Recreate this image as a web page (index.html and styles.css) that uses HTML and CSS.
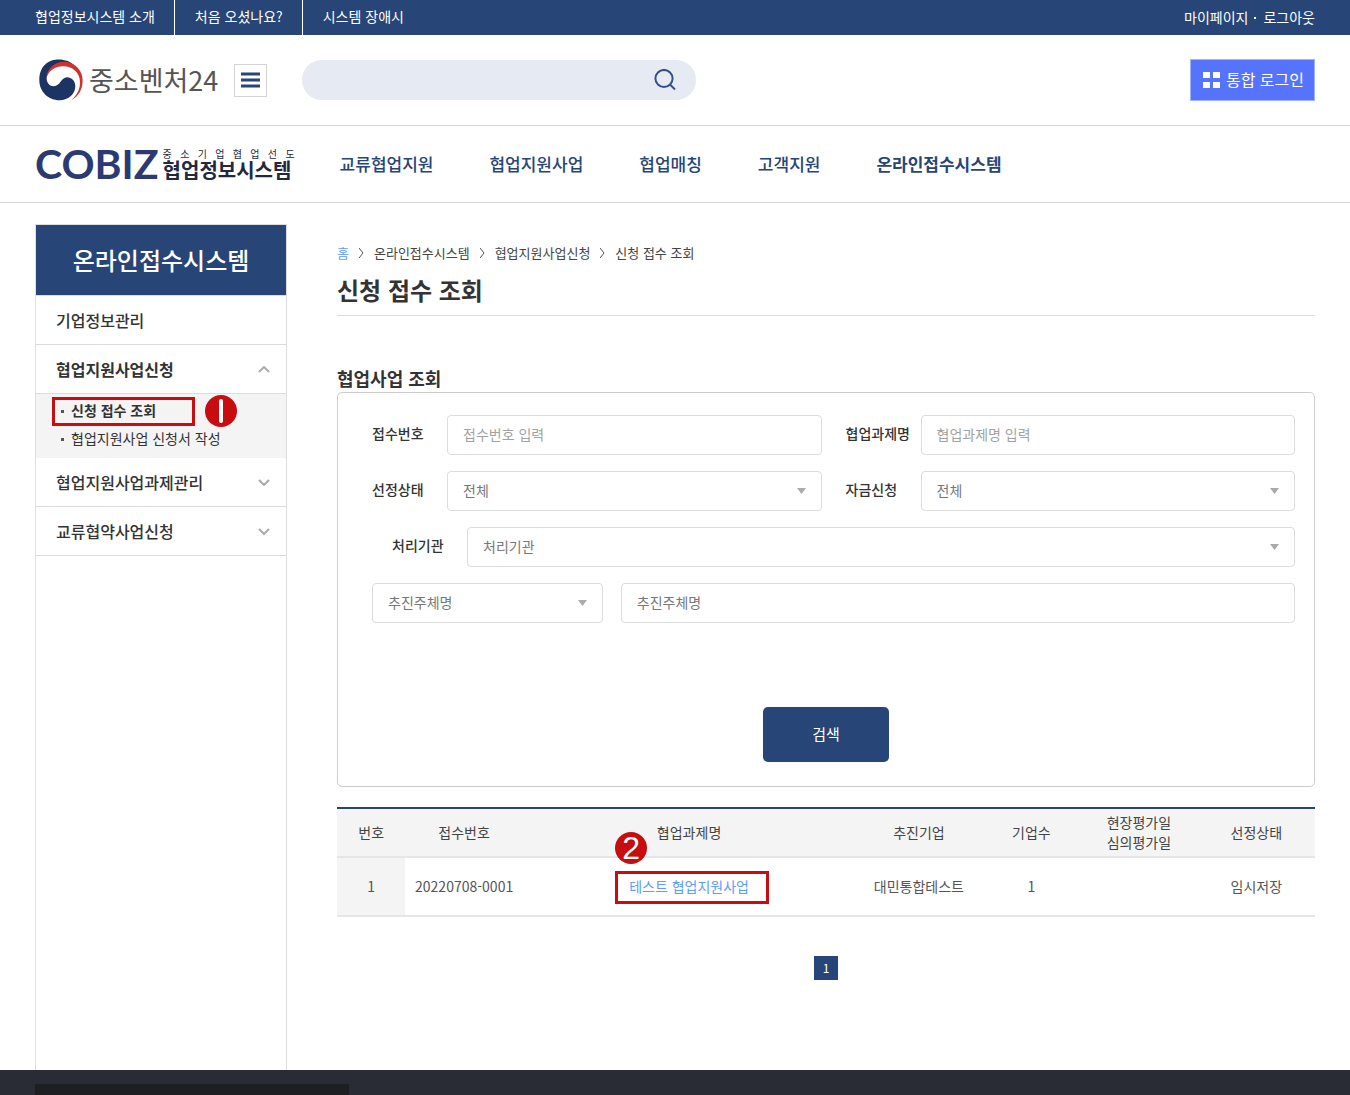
FILE: index.html
```html
<!DOCTYPE html>
<html lang="ko">
<head>
<meta charset="utf-8">
<meta name="viewport" content="width=device-width, initial-scale=1">
<title>신청 접수 조회</title>
<link rel="stylesheet" href="styles.css">
</head>
<body>
<div class="topbar">
  <nav class="topbar-links">
    <a href="#">협업정보시스템 소개</a>
    <a href="#">처음 오셨나요?</a>
    <a href="#">시스템 장애시</a>
  </nav>
  <div class="topbar-user">
    <a href="#">마이페이지</a><i class="dot"></i><a href="#">로그아웃</a>
  </div>
</div>

<header class="header">
  <a class="brand" href="#">
    <svg class="emblem" viewBox="26 26 132 126" aria-hidden="true">
      <path fill="#1c3464" d="M132 45C108 18 27 14 27 90C27 125 55 150 88 150C115 150 135 130 135 108C135 92 124 81 110 81C92 81 90 108 70 108C58 108 49 98 49 84C49 50 95 30 132 45Z"/>
      <path fill="#cb352e" d="M49 82C48 55 75 32 105 34C135 37 157 60 157 90C157 118 145 138 123 150C140 135 149 118 149 96C149 65 125 48 98 48C75 48 54 62 49 82Z"/>
    </svg>
    <span class="brand-name">중소벤처24</span>
  </a>
  <button class="menu-btn" type="button" aria-label="전체 메뉴">
    <svg width="19" height="16" viewBox="0 0 19 16"><path d="M0 2H19M0 8H19M0 14H19" stroke="#274576" stroke-width="3"/></svg>
  </button>
  <form class="search">
    <input class="search-input" type="text" aria-label="검색어">
    <button class="search-btn" type="button" aria-label="통합검색">
      <svg width="22" height="22" viewBox="0 0 22 22" fill="none" stroke="#345288" stroke-width="2"><circle cx="10" cy="9.500" r="8.600"/><path d="M16 15.500L21 20.500"/></svg>
    </button>
  </form>
  <button class="login-btn" type="button">
    <svg width="17" height="16" viewBox="0 0 17 16" fill="#fff"><path d="M0 0H7V6H0zM10 0H17V6H10zM0 10H7V16H0zM10 10H17V16H10z"/></svg>
    <span>통합 로그인</span>
  </button>
</header>

<div class="gnb">
  <a class="cobiz" href="#">
    <span class="cobiz-mark">COBIZ</span>
    <span class="cobiz-text">
      <span class="cobiz-sub">중 소 기 업 협 업 선 도</span>
      <span class="cobiz-name">협업정보시스템</span>
    </span>
  </a>
  <nav class="gnb-links">
    <a href="#">교류협업지원</a>
    <a href="#">협업지원사업</a>
    <a href="#">협업매칭</a>
    <a href="#">고객지원</a>
    <a class="current" href="#">온라인접수시스템</a>
  </nav>
</div>

<div class="main">
  <aside class="side">
    <p class="side-title">온라인접수시스템</p>
    <a class="side-item" href="#">기업정보관리</a>
    <a class="side-item open" href="#">협업지원사업신청
      <svg class="chev" viewBox="0 0 12 7"><path d="M1 6L6 1L11 6"/></svg></a>
    <ul class="side-sub">
      <li class="current"><a href="#">신청 접수 조회</a><span class="mark-box mark-box-menu"></span>
        <svg class="mark-num mark-num-menu" viewBox="0 0 32 32" role="img" aria-label="1"><circle cx="16" cy="16" r="16"/><rect x="14" y="4" width="4" height="24" rx="2"/></svg>
      </li>
      <li><a href="#">협업지원사업 신청서 작성</a></li>
    </ul>
    <a class="side-item" href="#">협업지원사업과제관리
      <svg class="chev" viewBox="0 0 12 7"><path d="M1 1L6 6L11 1"/></svg></a>
    <a class="side-item" href="#">교류협약사업신청
      <svg class="chev" viewBox="0 0 12 7"><path d="M1 1L6 6L11 1"/></svg></a>
  </aside>

  <main class="content">
    <nav class="crumbs">
      <a class="home" href="#">홈</a>
      <svg viewBox="0 0 5 10"><path d="M0 0L4 5L0 10"/></svg>
      <a href="#">온라인접수시스템</a>
      <svg viewBox="0 0 5 10"><path d="M0 0L4 5L0 10"/></svg>
      <a href="#">협업지원사업신청</a>
      <svg viewBox="0 0 5 10"><path d="M0 0L4 5L0 10"/></svg>
      <a href="#">신청 접수 조회</a>
    </nav>
    <h1>신청 접수 조회</h1>
    <h2>협업사업 조회</h2>
    <form class="panel">
      <div class="row">
        <div class="field">
          <label for="f-no">접수번호</label>
          <input class="control" id="f-no" type="text" placeholder="접수번호 입력">
        </div>
        <div class="field">
          <label for="f-task">협업과제명</label>
          <input class="control" id="f-task" type="text" placeholder="협업과제명 입력">
        </div>
      </div>
      <div class="row">
        <div class="field">
          <label for="f-state">선정상태</label>
          <select class="control" id="f-state"><option>전체</option></select>
        </div>
        <div class="field">
          <label for="f-fund">자금신청</label>
          <select class="control" id="f-fund"><option>전체</option></select>
        </div>
      </div>
      <div class="row row-indent">
        <div class="field">
          <label for="f-org">처리기관</label>
          <select class="control" id="f-org"><option>처리기관</option></select>
        </div>
      </div>
      <div class="row row-subject">
        <select class="control" aria-label="검색 구분"><option>추진주체명</option></select>
        <input class="control dark" type="text" aria-label="추진주체명" placeholder="추진주체명">
      </div>
      <button class="submit" type="button">검색</button>
    </form>

    <table class="list">
      <colgroup><col class="w7"><col class="w12"><col class="w34"><col class="w13"><col class="w10"><col class="w12"><col class="w12"></colgroup>
      <thead>
        <tr><th>번호</th><th>접수번호</th><th>협업과제명</th><th>추진기업</th><th>기업수</th><th>현장평가일<br>심의평가일</th><th>선정상태</th></tr>
      </thead>
      <tbody>
        <tr>
          <td class="no">1</td><td>20220708-0001</td>
          <td><span class="task"><a href="#">테스트 협업지원사업</a><span class="mark-box mark-box-task"></span><span class="mark-num mark-num-task">2</span></span></td>
          <td>대민통합테스트</td><td>1</td><td></td><td>임시저장</td>
        </tr>
      </tbody>
    </table>
    <nav class="pages"><a href="#">1</a></nav>
  </main>
</div>

<footer class="footer"><div class="footer-box"></div></footer>
</body>
</html>
```
FILE: styles.css
```css
* { box-sizing: border-box; }

body {
  margin: 0;
  min-height: 100vh;
  display: flex;
  flex-direction: column;
  background: #fff;
  color: #333;
  font: 14px/20px "Noto Sans CJK KR", sans-serif;
}

a { color: inherit; text-decoration: none; }
button, input, select { font: inherit; margin: 0; }
button { cursor: pointer; }
svg { display: block; flex: none; }

/* top bar */
.topbar {
  display: flex;
  justify-content: space-between;
  height: 35px;
  padding: 0 35px;
  background: #274576;
  color: #fff;
  line-height: 33px;
}
.topbar-links { display: flex; }
.topbar-links a { padding: 0 19px 0 20px; border-right: 1px solid #fff; }
.topbar-links a:first-child { padding-left: 0; }
.topbar-links a:last-child { border-right: 0; }
.topbar-user { display: flex; align-items: center; gap: 6px; }
.dot { width: 2px; height: 2px; margin-right: 1px; background: #fff; }

/* header */
.header {
  display: flex;
  align-items: center;
  height: 91px;
  padding: 0 35px;
  border-bottom: 1px solid #d7d7d7;
}
.brand { display: flex; align-items: center; gap: 6px; padding-left: 4px; }
.emblem { width: 44px; height: 42px; }
.brand-name { color: #555; font-size: 27px; font-weight: 400; line-height: 40px; }
.menu-btn {
  display: grid;
  place-items: center;
  width: 33px;
  height: 33px;
  margin-left: 16px;
  padding: 0;
  border: 1px solid #d4d4d4;
  background: #fff;
}
.search {
  display: flex;
  align-items: center;
  width: 394px;
  height: 40px;
  margin-left: 35px;
  padding: 0 20px;
  border-radius: 20px;
  background: #e6eaf3;
}
.search-input { flex: 1; min-width: 0; border: 0; outline: 0; background: none; }
.search-btn { padding: 0; border: 0; background: none; }
.login-btn {
  display: flex;
  align-items: center;
  gap: 6px;
  height: 42px;
  margin-left: auto;
  padding: 0 10px 0 12px;
  border: 1px solid #a3b3fb;
  background: #5673fd;
  color: #fff;
  font-size: 16px;
}
.login-btn span { padding-bottom: 2px; }

/* service navigation */
.gnb {
  display: flex;
  align-items: center;
  gap: 45px;
  height: 77px;
  padding: 0 35px;
  border-bottom: 1px solid #d7d7d7;
}
.cobiz { display: flex; align-items: center; gap: 4px; }
.cobiz-mark { color: #2b3a73; font: 700 41px/40px Lato, sans-serif; }
.cobiz-text { display: flex; flex-direction: column; gap: 1px; width: 132px; color: #23283f; }
.cobiz-sub { font-size: 10px; line-height: 10px; text-align-last: justify; }
.cobiz-name { font-size: 20px; font-weight: 700; line-height: 20px; }
.gnb-links {
  display: flex;
  gap: 56px;
  color: #274576;
  font-size: 17px;
  font-weight: 500;
  line-height: 26px;
}
.gnb-links .current { font-weight: 700; }

/* two-column body */
.main { flex: 1; display: flex; gap: 50px; padding: 21px 35px 0; }

.side { flex: none; width: 252px; border: 1px solid #dedede; border-bottom: 0; }
.side-title {
  margin: 0;
  border-bottom: 1px solid #dcdcdc;
  background: #274576;
  color: #fff;
  font-size: 24px;
  font-weight: 500;
  line-height: 70px;
  text-align: center;
}
.side-item {
  display: flex;
  align-items: center;
  justify-content: space-between;
  height: 49px;
  padding: 0 16px 0 20px;
  border-bottom: 1px solid #dcdcdc;
  font-size: 16px;
  font-weight: 500;
}
.side-item.open { font-weight: 700; }
.chev { width: 12px; height: 7px; fill: none; stroke: #aaa; stroke-width: 2; }
.side-sub { margin: 0; padding: 3px 0 5px; background: #f4f4f4; list-style: none; }
.side-sub li {
  position: relative;
  display: flex;
  align-items: center;
  gap: 7px;
  height: 28px;
  padding-left: 25px;
}
.side-sub li::before { content: ""; width: 3px; height: 3px; background: #555; }
.side-sub a { padding-bottom: 2px; }
.side-sub .current { font-weight: 700; }

/* numbered guide marks laid over the page */
.mark-box { position: absolute; border: 3px solid #c70d10; pointer-events: none; }
.mark-num { position: absolute; width: 32px; height: 32px; }
.mark-box-menu { left: 16px; top: 0; width: 143px; height: 29px; }
.mark-num-menu { left: 169px; top: -2px; }
.mark-num-menu circle { fill: #c70d10; }
.mark-num-menu rect { fill: #fff; }
.mark-box-task { inset: -5px -20px -8px -14px; }
.mark-num-task {
  left: -14px;
  top: -44px;
  border-radius: 50%;
  background: #c70d10;
  color: #fff;
  font: 32px/32px "Liberation Sans", sans-serif;
  text-align: center;
}

/* content */
.content { flex: 1; min-width: 0; padding-top: 19px; }
.crumbs { display: flex; align-items: center; gap: 10px; font-size: 13px; color: #444; }
.crumbs svg { width: 5px; height: 10px; fill: none; stroke: #555; stroke-width: 1; }
.crumbs .home { color: #5e9cf8; }
h1 {
  margin: 9px 0 49px;
  padding-bottom: 7px;
  border-bottom: 1px solid #dcdcdc;
  font-size: 24px;
  font-weight: 700;
  line-height: 36px;
}
h2 { margin: 0; padding-bottom: 1px; font-size: 18px; font-weight: 700; line-height: 26px; }

/* search panel */
.panel {
  display: flex;
  flex-direction: column;
  gap: 16px;
  padding: 22px 19px 24px 34px;
  border: 1px solid #ccc;
  border-radius: 5px;
}
.row { display: flex; gap: 24px; }
.row-indent { padding-left: 20px; }
.row-subject { gap: 18px; }
.row-subject select { flex: none; width: 25%; }
.field { flex: 1; display: flex; min-width: 0; }
.field label { flex: none; width: 75px; font-weight: 500; line-height: 36px; }
.control {
  flex: 1;
  min-width: 0;
  height: 40px;
  padding: 0 15px 2px;
  border: 1px solid #dcdcdc;
  border-radius: 4px;
  background: #fff;
  color: #777;
}
.control::placeholder { color: #a2a2a2; opacity: 1; }
.control.dark::placeholder { color: #777; }
select.control {
  appearance: none;
  background: #fff url("data:image/svg+xml,%3Csvg xmlns='http://www.w3.org/2000/svg' width='9' height='6'%3E%3Cpath d='M0 0H9L4.5 6Z' fill='%23aaa'/%3E%3C/svg%3E") no-repeat right 15px center;
}
.submit {
  align-self: center;
  width: 126px;
  height: 55px;
  margin: 68px 15px 0 0;
  padding-bottom: 3px;
  border: 0;
  border-radius: 5px;
  background: #274576;
  color: #fff;
  font-size: 15px;
}

/* result list */
.list {
  width: 100%;
  margin-top: 20px;
  border-collapse: separate;
  border-spacing: 0;
  border-top: 2px solid #274576;
  table-layout: fixed;
  text-align: center;
}
.w7 { width: 7%; }
.w10 { width: 10%; }
.w12 { width: 12%; }
.w13 { width: 13%; }
.w34 { width: 34%; }
.list th, .list td { padding: 0 0 2px; border-bottom: 2px solid #e6e6e6; }
.list th { height: 49px; background: #f4f4f4; color: #444; font-weight: 400; line-height: 20px; }
.list td { height: 59px; color: #555; }
.list .no { background: #f4f4f4; }
.task { position: relative; display: inline-block; }
.task a { color: #5e9cf8; }

.pages { display: flex; justify-content: center; margin: 39px 0; }
.pages a {
  width: 24px;
  background: #274576;
  color: #fff;
  font-size: 12px;
  line-height: 24px;
  text-align: center;
}

/* footer */
.footer { padding: 14px 35px 0; background: #292c35; }
.footer-box { width: 314px; height: 11px; background: #1e1f23; }
```
